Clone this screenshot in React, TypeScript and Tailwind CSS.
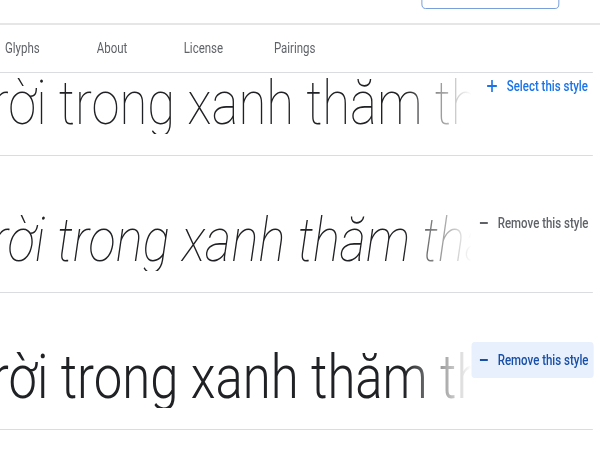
import React from "react";

const SAMPLE = "rời trong xanh thăm thẳm, không một gợn mây.";

function PlusIcon() {
  return (
    <svg width="12" height="12" viewBox="0 0 12 12" className="shrink-0">
      <path d="M6 0v12M0 6h12" stroke="currentColor" strokeWidth="2" />
    </svg>
  );
}

function DashIcon() {
  return (
    <svg width="10" height="12" viewBox="0 0 10 12" className="shrink-0">
      <path d="M0 6h10" stroke="currentColor" strokeWidth="2" />
    </svg>
  );
}

function Row({
  textClass,
  action,
}: {
  textClass: string;
  action: React.ReactNode;
}) {
  return (
    <div className="flex h-[136px] items-start">
      <div className="w-[575px] shrink-0 overflow-hidden pt-[53px] [mask-image:linear-gradient(to_right,#000_492px,transparent_575px)] [-webkit-mask-image:linear-gradient(to_right,#000_492px,transparent_575px)]">
        <div
          className={
            "-ml-[10px] whitespace-nowrap text-[62px] leading-none text-[#202124] " +
            textClass
          }
        >
          {SAMPLE}
        </div>
      </div>
      <div className="ml-auto mr-[9px] mt-[49px] shrink-0">{action}</div>
    </div>
  );
}

export default function App() {
  return (
    <div className="h-[450px] w-[600px] overflow-hidden bg-white">
      <div className="w-[732px] origin-top-left scale-x-[0.82] font-['Roboto',sans-serif]">
        {/* top header */}
        <div className="flex h-[23px] justify-end pr-[50px]">
          <div className="-mt-[21px] h-[30px] w-[168px] rounded-[5px] border border-[#6a95d6]" />
        </div>
        <div className="h-[2px] bg-[#e6e6e6]" />

        {/* tabs */}
        <nav className="flex h-[47px] items-center pl-[6px] text-[14px] text-[#5f6368]">
          <span className="w-[112px]">Glyphs</span>
          <span className="w-[106px]">About</span>
          <span className="w-[110px]">License</span>
          <span>Pairings</span>
        </nav>
        <div className="h-px w-[723px] bg-[#dadce0]" />

        {/* row 1 (partially scrolled under tab bar) */}
        <div className="h-[82px] overflow-hidden">
          <div className="-mt-[54px]">
            <Row
              textClass="font-thin"
              action={
                <button className="flex h-[36px] items-center gap-[12px] whitespace-nowrap rounded-[4px] pl-[10px] pr-[6px] text-[14px] font-medium text-[#1a73e8]">
                  <PlusIcon />
                  <span>Select this style</span>
                </button>
              }
            />
          </div>
        </div>
        <div className="h-px w-[723px] bg-[#dadce0]" />

        {/* row 2 */}
        <Row
          textClass="font-thin italic"
          action={
            <button className="flex h-[36px] items-center gap-[12px] whitespace-nowrap rounded-[4px] pl-[10px] pr-[6px] text-[14px] font-medium text-[#5f6368]">
              <DashIcon />
              <span>Remove this style</span>
            </button>
          }
        />
        <div className="h-px w-[723px] bg-[#dadce0]" />

        {/* row 3 */}
        <Row
          textClass="font-light"
          action={
            <button className="flex h-[36px] items-center gap-[12px] whitespace-nowrap rounded-[4px] bg-[#e8f0fe] pl-[10px] pr-[6px] text-[14px] font-medium text-[#174ea6]">
              <DashIcon />
              <span>Remove this style</span>
            </button>
          }
        />
        <div className="h-px w-[723px] bg-[#dadce0]" />
      </div>
    </div>
  );
}
